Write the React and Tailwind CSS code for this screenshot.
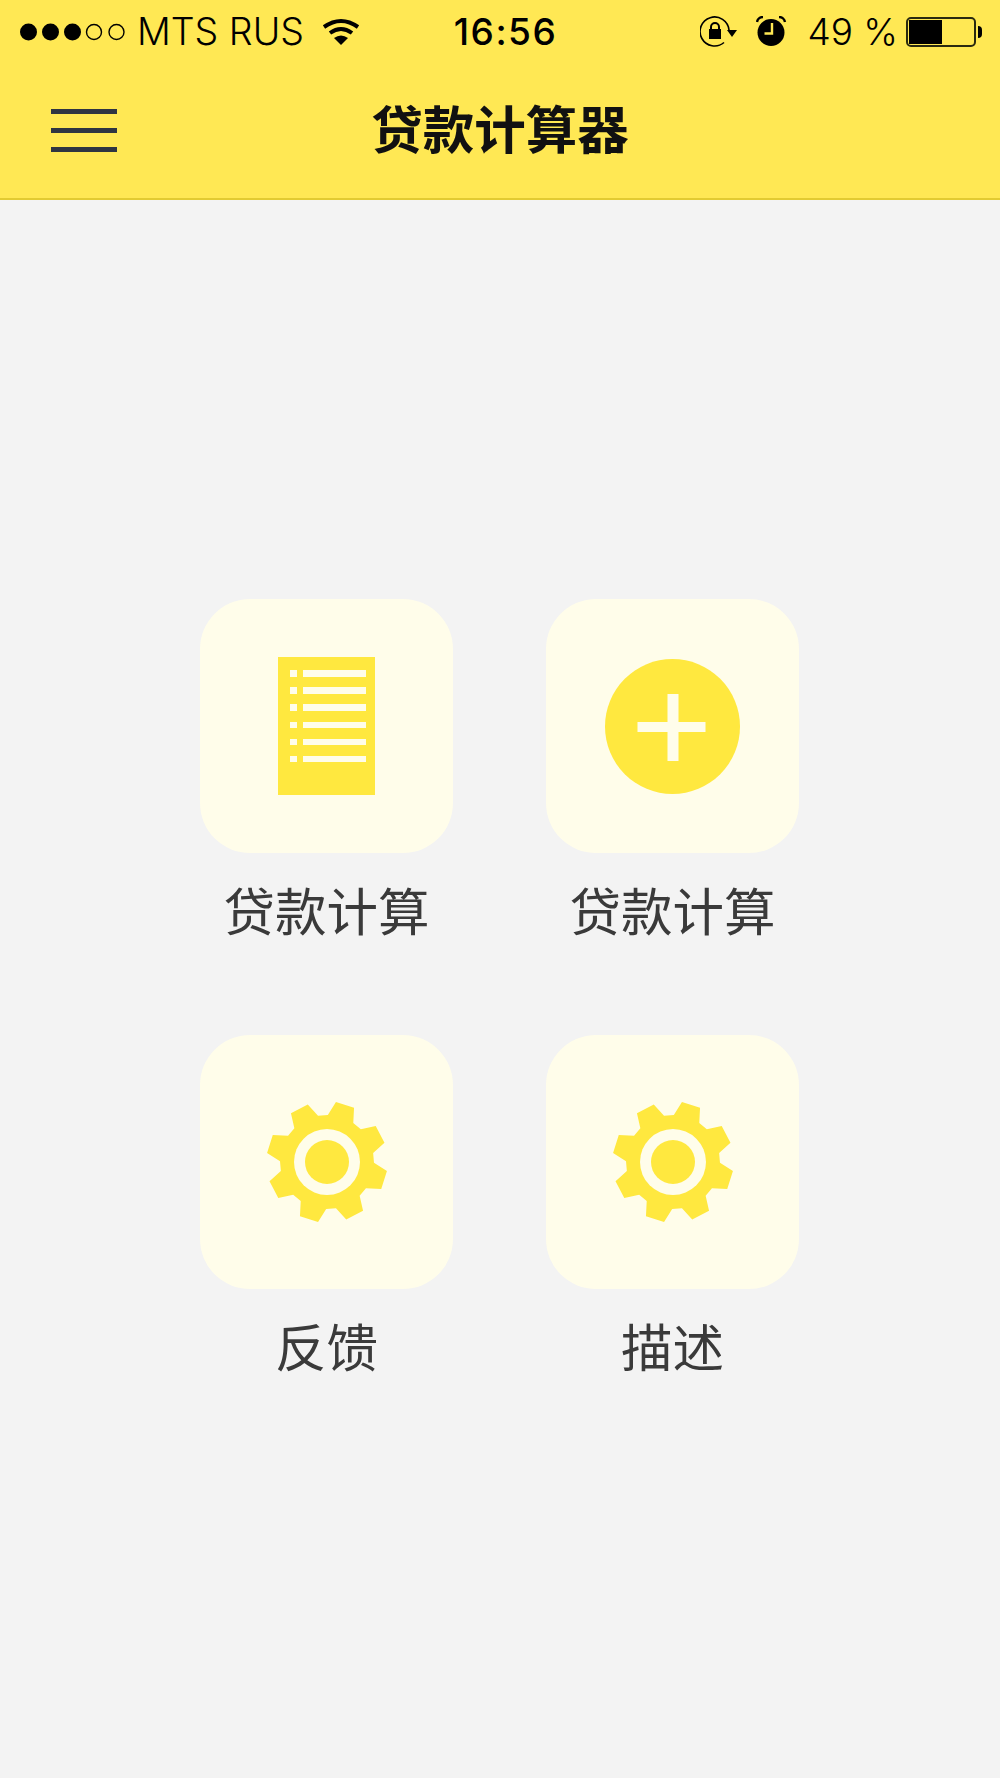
const CJK = "font-['Inter','Noto_Sans_CJK_SC',sans-serif]";

// 8 teeth around (0,0), the values are read off the reference
const gearPoints = [];
for (let i = 0; i < 8; i++) {
  const mid = 17.5 + i * 45;
  for (const [da, r] of [[-16.5, 47], [-9, 60.6], [9, 60.6], [16.5, 47]]) {
    const a = ((mid + da - 90) * Math.PI) / 180;
    gearPoints.push(`${(r * Math.cos(a)).toFixed(2)},${(r * Math.sin(a)).toFixed(2)}`);
  }
}

function Signal() {
  return (
    <svg width="106" height="18" viewBox="0 0 106 18" className="shrink-0">
      <circle cx="8.5" cy="9" r="8.5" fill="#000" />
      <circle cx="30.5" cy="9" r="8.5" fill="#000" />
      <circle cx="52.5" cy="9" r="8.5" fill="#000" />
      <circle cx="74" cy="9" r="7.5" fill="none" stroke="#000" strokeWidth="1.4" />
      <circle cx="96.5" cy="9" r="7.5" fill="none" stroke="#000" strokeWidth="1.4" />
    </svg>
  );
}

function Wifi() {
  return (
    <svg width="38" height="28" viewBox="0 0 38 28" className="shrink-0">
      <path d="M2 9 Q19 -3 36 9" fill="none" stroke="#000" strokeWidth="4" />
      <path d="M8 15 Q19 7 30 15" fill="none" stroke="#000" strokeWidth="4" />
      <path d="M19 27 L12 20 Q19 15 26 20 Z" fill="#000" />
    </svg>
  );
}

function RotateLock() {
  return (
    <svg width="37" height="32" viewBox="0 0 37 32" className="shrink-0">
      <path d="M29 14 A14.5 14.5 0 1 0 24 26.5" fill="none" stroke="#000" strokeWidth="1.6" />
      <path d="M27 14 H37 L32 21 Z" fill="#000" />
      <rect x="9" y="13" width="12" height="10" fill="#000" />
      <path d="M11 13 V11 A4 4 0 0 1 19 11 V13" fill="none" stroke="#000" strokeWidth="2" />
    </svg>
  );
}

function Alarm() {
  return (
    <svg width="31" height="31" viewBox="0 0 31 31" className="shrink-0">
      <circle cx="15" cy="16.5" r="13.5" fill="#000" />
      <path d="M16 7 V17.5 H8.5" fill="none" stroke="#ffe854" strokeWidth="2.4" />
      <path d="M1 6 A6 6 0 0 1 7 1" fill="none" stroke="#000" strokeWidth="2.4" />
      <path d="M29 6 A6 6 0 0 0 23 1" fill="none" stroke="#000" strokeWidth="2.4" />
    </svg>
  );
}

function Battery() {
  return (
    <div className="flex items-center shrink-0">
      <div className="w-[70px] h-[30px] border-2 border-[#2a2a10] rounded-[5px] p-[1px]">
        <div className="w-[33px] h-full bg-black" />
      </div>
      <div className="w-[4px] h-[12px] bg-black rounded-r-[4px] ml-[2px]" />
    </div>
  );
}

function DocIcon() {
  const rows = [0, 1, 2, 3, 4, 5];
  return (
    <div className="w-[97px] h-[138px] bg-[#ffe83f] pt-[13px] pl-[12px] flex flex-col gap-[10.7px]">
      {rows.map((r) => (
        <div key={r} className="flex gap-[6px]">
          <div className="w-[7px] h-[6.5px] bg-[#fffdea]" />
          <div className="w-[63px] h-[6.5px] bg-[#fffdea]" />
        </div>
      ))}
    </div>
  );
}

function PlusIcon() {
  return (
    <svg width="135" height="135" viewBox="0 0 135 135">
      <circle cx="67.5" cy="67.5" r="67.5" fill="#ffe83f" />
      <rect x="32.5" y="63" width="68" height="10" fill="#fffdea" />
      <rect x="62.5" y="35" width="11" height="67" fill="#fffdea" />
    </svg>
  );
}

function GearIcon() {
  return (
    <svg width="124" height="124" viewBox="-62 -62 124 124">
      <polygon points={gearPoints.join(" ")} fill="#ffe83f" />
      <circle r="33" fill="#fffdea" />
      <circle r="22" fill="#ffe83f" />
    </svg>
  );
}

function Tile({ icon, label }) {
  return (
    <div className="flex flex-col items-center">
      <div className="w-[253px] h-[254px] bg-[#fffdea] rounded-[50px] flex items-center justify-center">
        {icon}
      </div>
      <div className={`mt-[29px] h-[60px] leading-[60px] text-[51.5px] font-normal text-[#3a3a3a] ${CJK}`}>
        {label}
      </div>
    </div>
  );
}

export default function App() {
  return (
    <div className="min-h-[1778px] bg-[#f3f3f3] font-['Inter',sans-serif]">
      <header className="h-[200px] bg-[#ffe854] border-b-2 border-[#e2cb32]">
        <div className="h-[63px] flex items-center pl-[20px] pr-[18px] text-black">
          <div className="flex-1 flex items-center">
            <Signal />
            <span className="ml-[11px] text-[37.5px] leading-none font-light">MTS RUS</span>
            <span className="ml-[18px]">
              <Wifi />
            </span>
          </div>
          <div className="w-[118px] text-center text-[37px] tracking-[1.5px] leading-none font-medium ml-[9px]">16:56</div>
          <div className="flex-1 flex items-center justify-end">
            <RotateLock />
            <span className="ml-[19px]">
              <Alarm />
            </span>
            <span className="ml-[20px] text-[37px] leading-none font-light mr-[8px]">49 %</span>
            <Battery />
          </div>
        </div>
        <div className="relative flex items-center justify-center h-[135px]">
          <div className="absolute left-[51px] top-[46px] w-[66px] flex flex-col gap-[14px]">
            <div className="h-[5px] bg-[#2f3542]" />
            <div className="h-[5px] bg-[#2f3542]" />
            <div className="h-[5px] bg-[#2f3542]" />
          </div>
          <h1 className={`text-[51.5px] leading-none font-bold text-[#111] ${CJK}`}>贷款计算器</h1>
        </div>
      </header>
      <main className="pt-[399px] pr-[1px] grid grid-cols-[253px_253px] justify-center gap-x-[93px] gap-y-[93px]">
        <Tile icon={<DocIcon />} label="贷款计算" />
        <Tile icon={<PlusIcon />} label="贷款计算" />
        <Tile icon={<GearIcon />} label="反馈" />
        <Tile icon={<GearIcon />} label="描述" />
      </main>
    </div>
  );
}
